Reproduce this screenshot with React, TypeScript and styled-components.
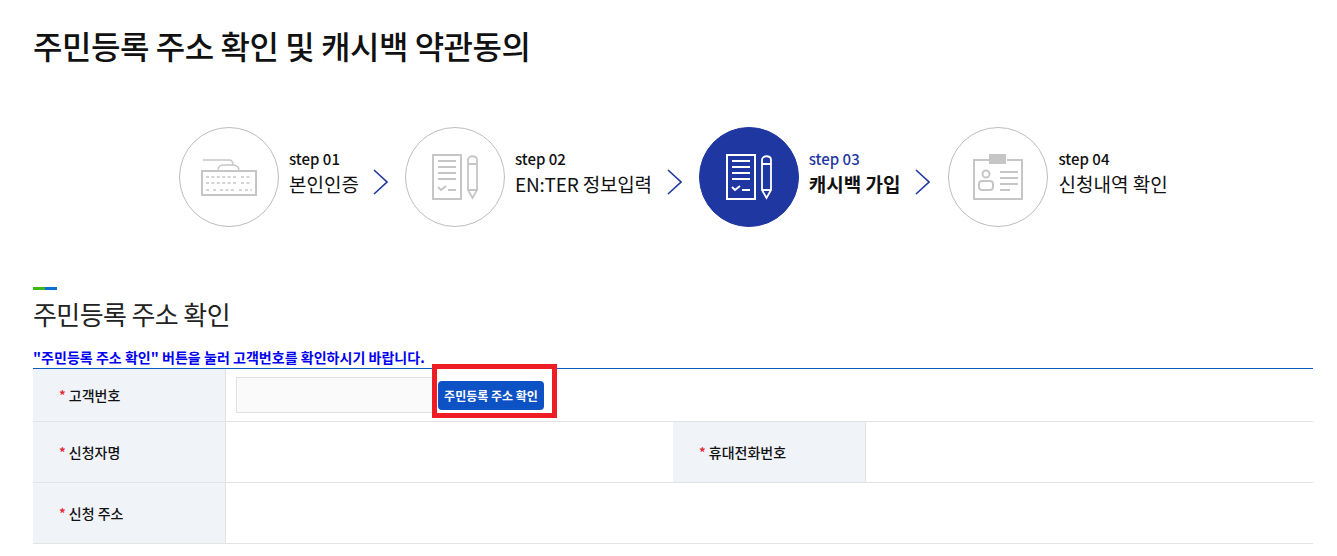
import React from "react";
import styled, { createGlobalStyle } from "styled-components";

const Global = createGlobalStyle`
  html, body { margin: 0; padding: 0; background: #fff; }
  body { font-family: "Noto Sans CJK KR", "Noto Sans", sans-serif; color: #111; }
`;

const Page = styled.main`
  width: 1337px;
  height: 556px;
  box-sizing: border-box;
  padding: 22px 24px 0 33px;
  overflow: hidden;
`;
const Title = styled.h1`
  margin: 0;
  font-size: 32px;
  line-height: 46px;
  letter-spacing: -0.45px;
  font-weight: 500;
  color: #111;
`;
const Steps = styled.ol`
  list-style: none;
  margin: 59px 0 0 146px;
  padding: 0;
  display: flex;
  align-items: center;
  height: 100px;
`;
const Step = styled.li`
  display: flex;
  align-items: center;
  gap: 10px;
`;
const Circle = styled.div<{ $active?: boolean }>`
  width: 100px;
  height: 100px;
  box-sizing: border-box;
  border-radius: 50%;
  border: 1px solid ${(p) => (p.$active ? "#1f37a0" : "#bdbdbd")};
  background: ${(p) => (p.$active ? "#1f37a0" : "#fff")};
  color: ${(p) => (p.$active ? "#fff" : "#c6c6c6")};
  display: flex;
  align-items: center;
  justify-content: center;
`;
const StepText = styled.div`
  display: flex;
  flex-direction: column;
  white-space: nowrap;
  margin-top: -6px;
`;
const StepNo = styled.span<{ $active?: boolean }>`
  font-size: 15px;
  line-height: 20px;
  font-weight: 500;
  color: ${(p) => (p.$active ? "#1f37a0" : "#111")};
`;
const StepName = styled.span<{ $active?: boolean; $tight?: boolean }>`
  font-size: 19px;
  line-height: 30px;
  letter-spacing: ${(p) => (p.$tight ? "-0.2px" : "0")};
  font-weight: ${(p) => (p.$active ? 700 : 400)};
  color: #111;
`;
const Arrow = styled.svg<{ $l: number; $r: number }>`
  flex: none;
  margin: 10px ${(p) => p.$r}px 0 ${(p) => p.$l}px;
`;
const Section = styled.section`
  margin-top: 60px;
`;
const Accent = styled.div`
  width: 24px;
  height: 3px;
  background: linear-gradient(to right, #3fb618 50%, #0a6fd0 50%);
`;
const Heading = styled.h2`
  margin: 6px 0 0;
  font-size: 26px;
  line-height: 36px;
  letter-spacing: -0.6px;
  font-weight: 400;
  color: #222;
`;
const Note = styled.p`
  margin: 15px 0 0;
  font-size: 14px;
  line-height: 20px;
  font-weight: 700;
  letter-spacing: 0.03px;
  color: #0000f0;
`;
const Table = styled.div`
  border-top: 1px solid #0a5cc0;
  margin-top: 1px;
  position: relative;
`;
const Row = styled.div<{ $h: number }>`
  display: grid;
  grid-template-columns: 193px 447px 193px 1fr;
  height: ${(p) => p.$h}px;
  border-bottom: 1px solid #e3e3e3;
`;
const Label = styled.div`
  background: #f0f3f7;
  border-right: 1px solid #e3e3e3;
  padding-left: 26px;
  display: flex;
  align-items: center;
  gap: 3px;
  font-size: 14px;
  font-weight: 500;
  color: #111;
`;
const Star = styled.span`
  color: #e8202a;
  font-size: 14px;
`;
const Value = styled.div<{ $wide?: boolean }>`
  grid-column: ${(p) => (p.$wide ? "2 / -1" : "auto")};
  display: flex;
  align-items: center;
  padding-left: 10px;
  position: relative;
`;
const Input = styled.input`
  width: 200px;
  height: 36px;
  box-sizing: border-box;
  background: #fafafa;
  border: 1px solid #e0e0e0;
  outline: none;
`;
const Lookup = styled.button`
  margin-left: 2px;
  width: 106px;
  height: 29px;
  border: 0;
  border-radius: 4px;
  background: #0d52c4;
  color: #fff;
  font: 700 12px "Noto Sans CJK KR", sans-serif;
  padding: 0;
  white-space: nowrap;
`;
const Highlight = styled.div`
  position: absolute;
  left: 206px;
  top: -5px;
  width: 125px;
  height: 54px;
  box-sizing: border-box;
  border: 5px solid #ee1c25;
  pointer-events: none;
`;

const Chevron = ({ l, r }: { l: number; r: number }) => (
  <Arrow $l={l} $r={r} width="15" height="26" viewBox="0 0 15 26" fill="none">
    <path d="M1 1l13 12L1 25" stroke="#1f37a0" strokeWidth="1.6" />
  </Arrow>
);

const Keyboard = () => (
  <svg width="56" height="37" viewBox="0 0 56 37" fill="none" stroke="currentColor" strokeWidth="1.4">
    <rect x="1" y="12" width="54" height="24" strokeWidth="2" />
    <path d="M2 1h26c3 0 4 2 4 5H22c-3 0-5 2-5 6M32 6c4 0 6 2 6 6" />
    <path d="M5 18h30M40 18h11M5 24h30M40 24h11M5 31h5M12 31h3M19 31h16M38 31h4M44 31h7" strokeDasharray="3 2.4" />
  </svg>
);
const Paper = () => (
  <svg width="46" height="46" viewBox="0 0 46 46" fill="none" stroke="currentColor" strokeWidth="2">
    <rect x="1" y="1" width="28" height="44" />
    <path d="M6 7h18M6 13h18M6 19h18M6 25h18M6 33l3 3 5-4M16 36h8" />
    <path d="M36 6c0-5 9-5 9 0v30l-4.500 8-4.500-8zM36 10h9M36 36h9" strokeWidth="1.8" />
  </svg>
);
const Badge = () => (
  <svg width="50" height="46" viewBox="0 0 50 46" fill="none" stroke="currentColor" strokeWidth="2">
    <path d="M16 6H1v39h48V6H34" />
    <rect x="16" y="0" width="17" height="10" fill="currentColor" stroke="none" />
    <circle cx="13" cy="20" r="3.500" />
    <rect x="6" y="27" width="14" height="9" rx="3" />
    <path d="M27 18h18M27 24h18M27 30h18M27 36h10" />
  </svg>
);

export default function App() {
  return (
    <Page>
      <Global />
      <Title>주민등록 주소 확인 및 캐시백 약관동의</Title>
      <Steps>
        <Step>
          <Circle><Keyboard /></Circle>
          <StepText><StepNo>step 01</StepNo><StepName>본인인증</StepName></StepText>
        </Step>
        <Chevron l={14} r={17} />
        <Step>
          <Circle><Paper /></Circle>
          <StepText><StepNo>step 02</StepNo><StepName $tight>EN:TER 정보입력</StepName></StepText>
        </Step>
        <Chevron l={15} r={17} />
        <Step>
          <Circle $active><Paper /></Circle>
          <StepText><StepNo $active>step 03</StepNo><StepName $active>캐시백 가입</StepName></StepText>
        </Step>
        <Chevron l={15} r={18} />
        <Step>
          <Circle><Badge /></Circle>
          <StepText><StepNo>step 04</StepNo><StepName>신청내역 확인</StepName></StepText>
        </Step>
      </Steps>
      <Section>
        <Accent />
        <Heading>주민등록 주소 확인</Heading>
        <Note>"주민등록 주소 확인" 버튼을 눌러 고객번호를 확인하시기 바랍니다.</Note>
        <Table>
          <Row $h={52}>
            <Label><Star>*</Star>고객번호</Label>
            <Value $wide>
              <Input aria-label="고객번호" />
              <Lookup>주민등록 주소 확인</Lookup>
              <Highlight />
            </Value>
          </Row>
          <Row $h={60}>
            <Label><Star>*</Star>신청자명</Label>
            <Value />
            <Label><Star>*</Star>휴대전화번호</Label>
            <Value />
          </Row>
          <Row $h={60}>
            <Label><Star>*</Star>신청 주소</Label>
            <Value $wide />
          </Row>
        </Table>
      </Section>
    </Page>
  );
}
